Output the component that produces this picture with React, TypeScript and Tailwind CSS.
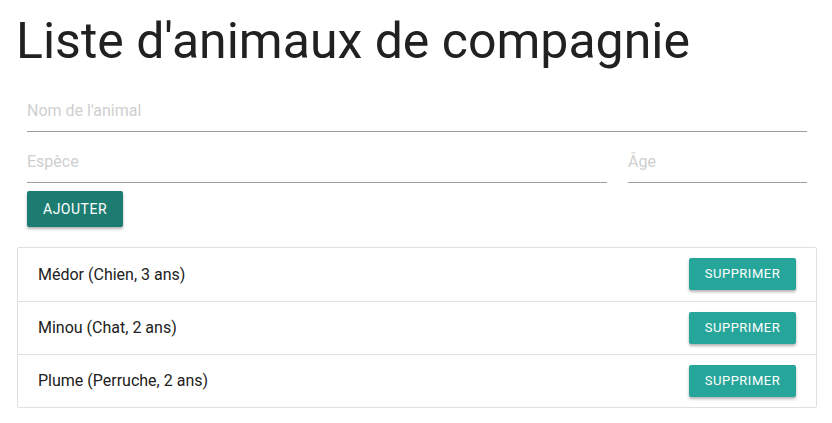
import React, { useState } from 'react';

interface Pet {
    id: number;
    name: string;
    species: string;
    age: number;
}

const initialPets: Pet[] = [
    { id: 1, name: 'Médor', species: 'Chien', age: 3 },
    { id: 2, name: 'Minou', species: 'Chat', age: 2 },
    { id: 3, name: 'Plume', species: 'Perruche', age: 2 },
];

const inputClasses = "w-full h-[46px] pt-[4px] bg-transparent border-b border-[#9e9e9e] text-base text-[#212121] placeholder:text-[#cfcfcf] outline-none";

export default function App() {
    const [pets, setPets] = useState<Pet[]>(initialPets);
    const [name, setName] = useState('');
    const [species, setSpecies] = useState('');
    const [age, setAge] = useState('');

    const handleAdd = (e: React.FormEvent) => {
        e.preventDefault();
        if (!name) return;
        setPets(p => [...p, { id: Date.now(), name, species, age: Number(age) || 0 }]);
        setName('');
        setSpecies('');
        setAge('');
    };

    return (
        <div className="min-h-screen bg-white font-['Roboto',sans-serif] text-[#212121]">
            <div className="max-w-[800px] mx-auto">
                <h1 className="text-[50px] leading-none font-normal pt-[16px] pb-[20px]">Liste d'animaux de compagnie</h1>
                <form onSubmit={handleAdd} className="px-[11px] pr-[9px]">
                    <input type="text" value={name} onChange={e => setName(e.target.value)} placeholder="Nom de l'animal" className={inputClasses} />
                    <div className="flex gap-[21px] mt-[5px]">
                        <input type="text" value={species} onChange={e => setSpecies(e.target.value)} placeholder="Espèce" className={inputClasses} />
                        <input type="text" value={age} onChange={e => setAge(e.target.value)} placeholder="Âge" className={inputClasses + " !w-[179px] shrink-0"} />
                    </div>
                    <button type="submit" className="mt-[8px] h-[36px] px-[16px] bg-[#1c7c72] text-white text-sm font-normal uppercase tracking-[0.5px] rounded-[2px] shadow-[0_2px_3px_rgba(0,0,0,0.3)]">
                        Ajouter
                    </button>
                </form>
                <ul className="mt-[20px] ml-[1px] -mr-[1px] border border-[#e0e0e0] rounded-[2px]">
                    {pets.map((pet, i) => (
                        <li key={pet.id} className={"flex items-center justify-between h-[53px] pl-[20px] pr-[20px]" + (i > 0 ? " border-t border-[#e0e0e0]" : "")}>
                            <span className="text-base">{pet.name} ({pet.species}, {pet.age} ans)</span>
                            <button onClick={() => setPets(p => p.filter(x => x.id !== pet.id))} className="h-[32px] w-[107px] mt-[-1px] bg-[#26a69a] text-white text-[13px] font-normal uppercase tracking-[0.5px] rounded-[2px] shadow-[0_2px_3px_rgba(0,0,0,0.3)]">
                                Supprimer
                            </button>
                        </li>
                    ))}
                </ul>
            </div>
        </div>
    );
}
